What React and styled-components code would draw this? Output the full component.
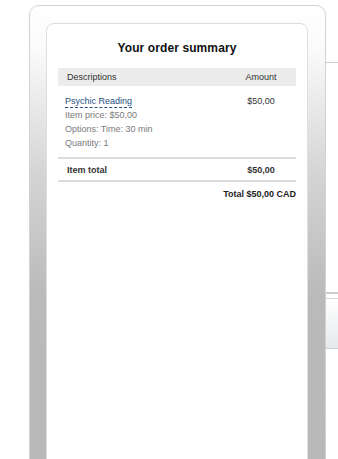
import React from "react";
import styled, { createGlobalStyle } from "styled-components";

const GlobalStyle = createGlobalStyle`
  html, body {
    margin: 0;
    padding: 0;
    background: #fff;
    font-family: Arial, "Liberation Sans", sans-serif;
    overflow: hidden;
  }
  * { box-sizing: border-box; }
`;

const Page = styled.div`
  display: flex;
  flex-direction: row;
  width: 338px;
  height: 459px;
  overflow: hidden;
`;

const Frame = styled.div`
  flex: none;
  margin: 5px 0 0 29px;
  width: 297px;
  height: 470px;
  border: 1px solid #d2d2d2;
  border-radius: 10px;
  background: linear-gradient(to bottom, #ffffff 0px, #fbfbfb 40px, #d4d4d4 170px, #bababa 290px, #b8b8b8 100%);
  padding: 17px 17px 0 16px;
`;

const Panel = styled.div`
  background: #fff;
  border: 1px solid #dedede;
  border-radius: 8px;
  height: 460px;
  padding: 13px 11px 0 11px;
`;

const Title = styled.h2`
  margin: 0;
  text-align: center;
  font-size: 12px;
  font-weight: bold;
  color: #111;
  line-height: 22px;
  letter-spacing: 0.1px;
`;

const Table = styled.div`
  margin-top: 9px;
  font-size: 9px;
`;

const Row = styled.div`
  display: flex;
  align-items: ${p => (p.$center ? "center" : "flex-start")};
  height: ${p => p.$h || "auto"};
  background: ${p => p.$bg || "transparent"};
  border-bottom: ${p => (p.$line ? "2px solid #dcdcdc" : "none")};
  padding: ${p => p.$pad || "0"};
`;

const DescCell = styled.div`
  flex: 1;
  padding-left: ${p => p.$indent || "9px"};
  color: ${p => p.$color || "#333"};
  font-weight: ${p => (p.$bold ? "bold" : "normal")};
`;

const AmountCell = styled.div`
  width: 70px;
  text-align: center;
  color: #333;
  font-weight: ${p => (p.$bold ? "bold" : "normal")};
`;

const ItemLink = styled.a`
  color: #1f4e85;
  text-decoration: none;
  border-bottom: 1px dashed #1f4e85;
  line-height: 11px;
  display: inline-block;
`;

const Detail = styled.div`
  color: #7a7a7a;
  line-height: 14px;
`;

const Total = styled.div`
  text-align: right;
  font-weight: bold;
  color: #222;
  padding-top: 7px;
`;

const Strip = styled.div`
  flex: 1;
  display: flex;
  flex-direction: column;
`;

const StripLine = styled.div`
  margin-top: ${p => p.$top || "0px"};
  height: ${p => p.$h || "1px"};
  background: ${p => p.$bg || "#cfcfcf"};
`;

export default function App() {
  return (
    <Page>
      <GlobalStyle />
      <Frame>
        <Panel>
          <Title>Your order summary</Title>
          <Table>
            <Row $bg="#ececec" $h="18px" $center>
              <DescCell>Descriptions</DescCell>
              <AmountCell>Amount</AmountCell>
            </Row>
            <Row $line $pad="10px 0 7px 0">
              <DescCell $indent="7px">
                <ItemLink href="#">Psychic Reading</ItemLink>
                <Detail>Item price: $50,00</Detail>
                <Detail>Options: Time: 30 min</Detail>
                <Detail>Quantity: 1</Detail>
              </DescCell>
              <AmountCell>$50,00</AmountCell>
            </Row>
            <Row $line $h="23px" $center>
              <DescCell $bold>Item total</DescCell>
              <AmountCell $bold>$50,00</AmountCell>
            </Row>
            <Total>Total $50,00 CAD</Total>
          </Table>
        </Panel>
      </Frame>
      <Strip>
        <StripLine $top="62px" />
        <StripLine $top="229px" $h="2px" $bg="#cdcdcd" />
        <StripLine $top="4px" $h="1px" $bg="#d6d6d6" />
        <StripLine $h="49px" $bg="linear-gradient(to bottom, #ffffff, #e6e9ec)" />
        <StripLine $h="1px" $bg="#cfcfcf" />
      </Strip>
    </Page>
  );
}
